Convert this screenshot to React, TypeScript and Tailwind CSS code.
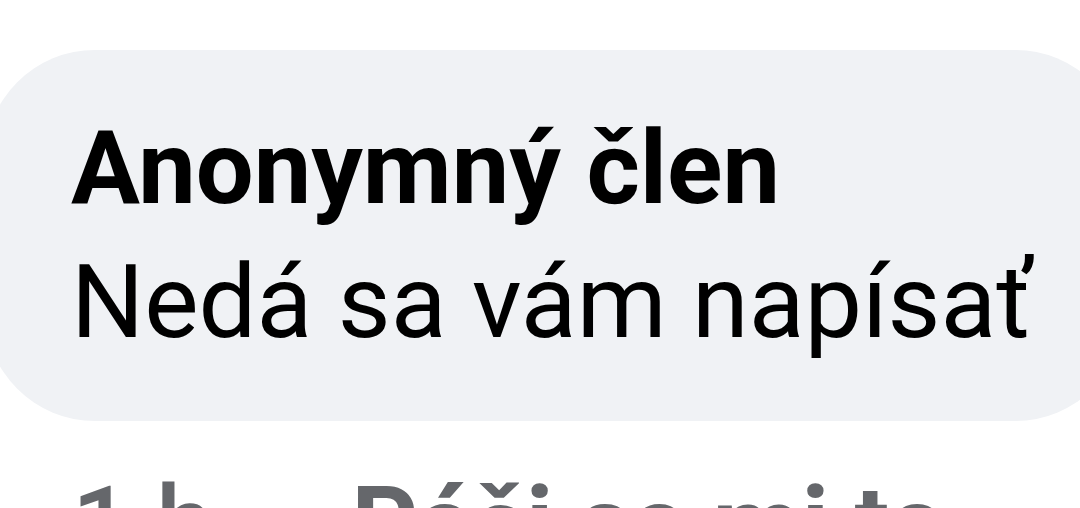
export default function App() {
  return (
    <div className="w-[1080px] h-[508px] overflow-hidden bg-white font-['Roboto',sans-serif]">
      <div className="pt-[50px]">
        <div className="ml-[-15px] w-[1140px] h-[371px] rounded-[110px] bg-[#f0f2f5] pl-[86px] pt-[51px]">
          <div className="text-[102.6px] leading-[134px] font-bold text-black">Anonymný člen</div>
          <div className="text-[102.6px] leading-[134px] text-black">Nedá sa vám napísať</div>
        </div>
        <div className="mt-[52px] pl-[72px] flex items-baseline gap-[138px] text-[103px] leading-none text-[#65676b]">
          <span className="font-medium">1 h</span>
          <span className="font-bold">Páči sa mi to</span>
        </div>
      </div>
    </div>
  );
}
